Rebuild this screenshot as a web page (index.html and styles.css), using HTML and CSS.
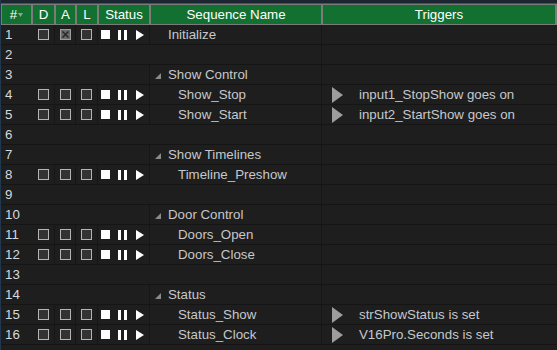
FILE: index.html
```html
<!DOCTYPE html>
<html>
<head>
<meta charset="utf-8">
<link rel="stylesheet" href="styles.css">
</head>
<body>
<div class="app">
  <div class="topstrip"></div>
  <div class="header">
    <div class="hcell hnum">#<svg class="sort" width="5" height="4" viewBox="0 0 5 4"><path d="M0 0H5L2.5 4Z" fill="#9a9a9a"/></svg></div>
    <div class="hcell">D</div>
    <div class="hcell">A</div>
    <div class="hcell">L</div>
    <div class="hcell">Status</div>
    <div class="hcell">Sequence Name</div>
    <div class="hcell">Triggers</div>
  </div>
  <div class="body">
    <div class="row item">
      <div class="c num">1</div>
      <div class="c chk"><span class="box"></span></div>
      <div class="c chk"><span class="box checked"><svg width="9" height="9" viewBox="0 0 9 9"><path d="M1.5 1.5L7.5 7.5M7.5 1.5L1.5 7.5" stroke="#2a2a2a" stroke-width="1.6"/></svg></span></div>
      <div class="c chk"><span class="box"></span></div>
      <div class="c status"><span class="stop"></span><span class="pause"></span><span class="play"></span></div>
      <div class="c name top">Initialize</div>
      <div class="c trig"></div>
    </div>
    <div class="row empty"><div class="c num">2</div><div class="c span5"></div><div class="c trig"></div></div>
    <div class="row group"><div class="c num">3</div><div class="c span4"></div><div class="c name grp"><span class="disc"></span>Show Control</div><div class="c trig"></div></div>
    <div class="row item">
      <div class="c num">4</div>
      <div class="c chk"><span class="box"></span></div>
      <div class="c chk"><span class="box"></span></div>
      <div class="c chk"><span class="box"></span></div>
      <div class="c status"><span class="stop"></span><span class="pause"></span><span class="play"></span></div>
      <div class="c name child">Show_Stop</div>
      <div class="c trig"><span class="tplay"></span>input1_StopShow goes on</div>
    </div>
    <div class="row item">
      <div class="c num">5</div>
      <div class="c chk"><span class="box"></span></div>
      <div class="c chk"><span class="box"></span></div>
      <div class="c chk"><span class="box"></span></div>
      <div class="c status"><span class="stop"></span><span class="pause"></span><span class="play"></span></div>
      <div class="c name child">Show_Start</div>
      <div class="c trig"><span class="tplay"></span>input2_StartShow goes on</div>
    </div>
    <div class="row empty"><div class="c num">6</div><div class="c span5"></div><div class="c trig"></div></div>
    <div class="row group"><div class="c num">7</div><div class="c span4"></div><div class="c name grp"><span class="disc"></span>Show Timelines</div><div class="c trig"></div></div>
    <div class="row item">
      <div class="c num">8</div>
      <div class="c chk"><span class="box"></span></div>
      <div class="c chk"><span class="box"></span></div>
      <div class="c chk"><span class="box"></span></div>
      <div class="c status"><span class="stop"></span><span class="pause"></span><span class="play"></span></div>
      <div class="c name child">Timeline_Preshow</div>
      <div class="c trig"></div>
    </div>
    <div class="row empty"><div class="c num">9</div><div class="c span5"></div><div class="c trig"></div></div>
    <div class="row group"><div class="c num">10</div><div class="c span4"></div><div class="c name grp"><span class="disc"></span>Door Control</div><div class="c trig"></div></div>
    <div class="row item">
      <div class="c num">11</div>
      <div class="c chk"><span class="box"></span></div>
      <div class="c chk"><span class="box"></span></div>
      <div class="c chk"><span class="box"></span></div>
      <div class="c status"><span class="stop"></span><span class="pause"></span><span class="play"></span></div>
      <div class="c name child">Doors_Open</div>
      <div class="c trig"></div>
    </div>
    <div class="row item">
      <div class="c num">12</div>
      <div class="c chk"><span class="box"></span></div>
      <div class="c chk"><span class="box"></span></div>
      <div class="c chk"><span class="box"></span></div>
      <div class="c status"><span class="stop"></span><span class="pause"></span><span class="play"></span></div>
      <div class="c name child">Doors_Close</div>
      <div class="c trig"></div>
    </div>
    <div class="row empty"><div class="c num">13</div><div class="c span5"></div><div class="c trig"></div></div>
    <div class="row group"><div class="c num">14</div><div class="c span4"></div><div class="c name grp"><span class="disc"></span>Status</div><div class="c trig"></div></div>
    <div class="row item">
      <div class="c num">15</div>
      <div class="c chk"><span class="box"></span></div>
      <div class="c chk"><span class="box"></span></div>
      <div class="c chk"><span class="box"></span></div>
      <div class="c status"><span class="stop"></span><span class="pause"></span><span class="play"></span></div>
      <div class="c name child">Status_Show</div>
      <div class="c trig"><span class="tplay"></span>strShowStatus is set</div>
    </div>
    <div class="row item">
      <div class="c num">16</div>
      <div class="c chk"><span class="box"></span></div>
      <div class="c chk"><span class="box"></span></div>
      <div class="c chk"><span class="box"></span></div>
      <div class="c status"><span class="stop"></span><span class="pause"></span><span class="play"></span></div>
      <div class="c name child">Status_Clock</div>
      <div class="c trig"><span class="tplay"></span>V16Pro.Seconds is set</div>
    </div>
  </div>
</div>
</body>
</html>
```
FILE: styles.css
```css
html, body {
  margin: 0;
  padding: 0;
  background: #1e1e1e;
}
body {
  font-family: "Liberation Sans", Arial, sans-serif;
  font-size: 13.3px;
  width: 557px;
  height: 350px;
  overflow: hidden;
}
.app {
  width: 557px;
  height: 350px;
  background: #1e1e1e;
  border-left: 1px solid #22384f;
  box-sizing: border-box;
}
.topstrip {
  height: 3px;
  background: #1c2631;
  border-bottom: 1px solid #35566f;
}
.header {
  display: grid;
  grid-template-columns: 29px 21px 19px 20px 50px 170px 232px;
  column-gap: 2px;
  background: #7b7b7b;
  padding: 1px 2px 1px 1px;
  height: 19px;
}
.hcell {
  background: #127131;
  color: #ffffff;
  display: flex;
  align-items: center;
  justify-content: center;
  line-height: 19px;
}
.hnum {
  position: relative;
}
.sort {
  margin-left: 1px;
  margin-top: 1px;
}
.body {
  display: flex;
  flex-direction: column;
}
.row {
  display: grid;
  grid-template-columns: 31px 23px 21px 22px 52px 172px 1fr;
  height: 20px;
  border-bottom: 1px solid #151515;
  box-sizing: border-box;
}
.row.empty {
  grid-template-columns: 31px 290px 1fr;
}
.row.group {
  grid-template-columns: 31px 118px 172px 1fr;
}
.c {
  border-right: 1px solid #161616;
  display: flex;
  align-items: center;
  color: #c5c8cc;
  white-space: nowrap;
  overflow: hidden;
}
.c.trig {
  border-right: none;
}
.num {
  color: #d5dade;
  padding-left: 4px;
  border-right: none;
}
.chk {
  justify-content: center;
}
.box {
  width: 9px;
  height: 9px;
  border: 1px solid #b4b4b4;
  background: #333333;
  display: block;
}
.box.checked {
  background: #6a6a6a;
  border-color: #9c9c9c;
}
.box svg {
  display: block;
}
.status {
  justify-content: flex-start;
  padding-left: 3px;
  gap: 8px;
}
.stop {
  width: 9px;
  height: 9px;
  background: #ffffff;
  display: block;
}
.pause {
  width: 3px;
  height: 10px;
  border-left: 3px solid #ffffff;
  border-right: 3px solid #ffffff;
  display: block;
}
.play {
  width: 0;
  height: 0;
  border-top: 5px solid transparent;
  border-bottom: 5px solid transparent;
  border-left: 8px solid #ffffff;
  display: block;
  margin-left: 1px;
}
.name.top {
  padding-left: 18px;
}
.name.grp {
  padding-left: 5px;
}
.name.child {
  padding-left: 28px;
}
.disc {
  width: 0;
  height: 0;
  border-bottom: 6px solid #8a8a8a;
  border-left: 6px solid transparent;
  margin-right: 7px;
  margin-top: 2px;
  display: block;
}
.trig {
  padding-left: 10px;
}
.tplay {
  width: 0;
  height: 0;
  border-top: 8px solid transparent;
  border-bottom: 8px solid transparent;
  border-left: 11px solid #9d9d9d;
  margin-right: 16px;
  display: block;
}
```
